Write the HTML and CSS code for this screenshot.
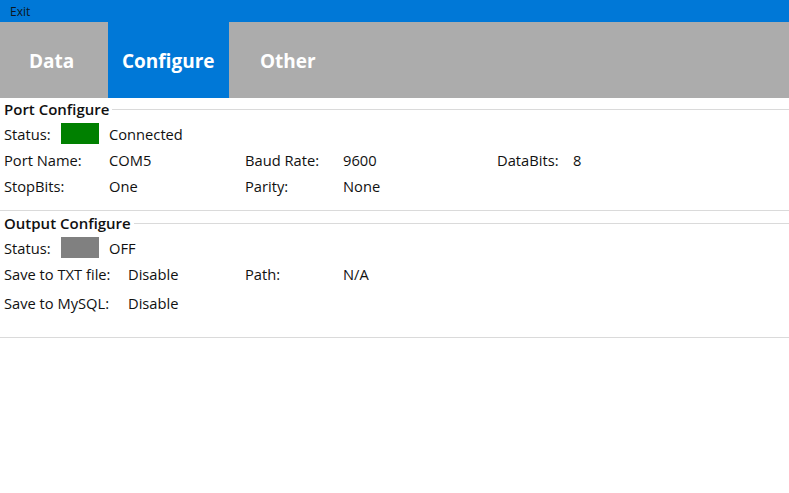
FILE: index.html
```html
<!DOCTYPE html>
<html>
<head>
<meta charset="utf-8">
<link rel="stylesheet" href="styles.css">
</head>
<body>
<div class="menubar"><span class="menu-item">Exit</span></div>
<div class="tabs">
  <div class="tab tab-data">Data</div>
  <div class="tab tab-config active">Configure</div>
  <div class="tab tab-other">Other</div>
</div>

<section class="group group-port">
  <div class="group-head"><span class="group-title">Port Configure</span><span class="group-line"></span></div>
  <div class="status-row">
    <span class="status-label">Status:</span>
    <span class="status-box green"></span>
    <span>Connected</span>
  </div>
  <div class="port-row">
    <span>Port Name:</span><span>COM5</span>
    <span>Baud Rate:</span><span>9600</span>
    <span>DataBits:</span><span>8</span>
  </div>
  <div class="port-row">
    <span>StopBits:</span><span>One</span>
    <span>Parity:</span><span>None</span>
  </div>
</section>

<section class="group group-output">
  <div class="group-head"><span class="group-title">Output Configure</span><span class="group-line"></span></div>
  <div class="status-row">
    <span class="status-label">Status:</span>
    <span class="status-box gray"></span>
    <span>OFF</span>
  </div>
  <div class="out-row">
    <span>Save to TXT file:</span><span>Disable</span>
    <span>Path:</span><span>N/A</span>
  </div>
  <div class="out-row tall">
    <span>Save to MySQL:</span><span>Disable</span>
  </div>
</section>
</body>
</html>
```
FILE: styles.css
```css
html, body {
  margin: 0;
  padding: 0;
  background: #ffffff;
}
body {
  font-family: "Open Sans", "Noto Sans", sans-serif;
  font-size: 14.7px;
  color: #111;
}
.menubar {
  height: 22px;
  background: #0078d7;
  display: flex;
  align-items: center;
  padding-left: 10px;
}
.menu-item {
  font-size: 12px;
  color: #0c1622;
}
.tabs {
  height: 76px;
  background: #acacac;
  display: flex;
}
.tab {
  height: 76px;
  padding-top: 2px;
  display: flex;
  align-items: center;
  color: #ffffff;
  font-weight: 700;
  font-size: 19px;
  box-sizing: border-box;
}
.tab.active {
  background: #0078d7;
}
.tab-data { width: 108px; padding-left: 29px; }
.tab-config { width: 121px; padding-left: 14px; }
.tab-other { width: 120px; padding-left: 31px; }

.group {
  border-bottom: 1px solid #dadada;
}
.group-port {
  height: 112px;
}
.group-output {
  margin-top: 1px;
  height: 125px;
}
.group-head {
  height: 22px;
  display: flex;
  align-items: center;
  padding-left: 4px;
}
.group-title {
  font-weight: 600;
  font-size: 15px;
  margin-right: 3px;
}
.group-line {
  flex: 1;
  height: 1px;
  background: #dadada;
}
.status-row {
  height: 27px;
  display: flex;
  align-items: center;
  padding-left: 4px;
}
.status-label {
  width: 57px;
}
.status-box {
  width: 38px;
  height: 21px;
  margin-right: 10px;
}
.status-box.green { background: #008000; }
.status-box.gray { background: #808080; }

.port-row {
  height: 26px;
  display: grid;
  grid-template-columns: 105px 136px 98px 154px 76px 1fr;
  align-items: center;
  padding-left: 4px;
}
.out-row {
  height: 25px;
  display: grid;
  grid-template-columns: 124px 117px 98px 1fr;
  align-items: center;
  padding-left: 4px;
}
.out-row.tall {
  height: 34px;
}
```
